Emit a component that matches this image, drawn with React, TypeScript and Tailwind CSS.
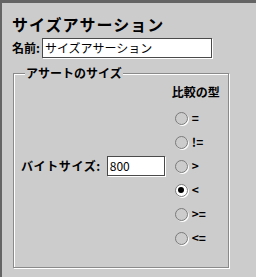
import React from "react";

const ops = ["=", "!=", ">", "<", ">=", "<="];

function Radio({ checked, label }: { checked?: boolean; label: string }) {
  return (
    <div className="flex h-[24px] items-center pl-[3px]">
      <span
        className={
          "flex h-[13px] w-[13px] items-center justify-center rounded-full border border-[#7a7a7a] shadow-[1px_1px_0_#ffffff] " +
          (checked ? "bg-white" : "bg-[#cccccc]")
        }
      >
        {checked && <span className="h-[6px] w-[6px] rounded-full bg-black" />}
      </span>
      <span className="ml-[4px] text-[12px] font-bold leading-[16px]">{label}</span>
    </div>
  );
}

export default function App() {
  return (
    <div
      className="h-[277px] w-[256px] overflow-hidden border-l-[2px] border-t-[3px] border-[#646464] bg-[#cccccc] pl-[10px] pt-[11px] text-black"
      style={{ fontFamily: '"Noto Sans CJK JP", "Noto Sans", sans-serif' }}
    >
      <div className="text-[16px] font-bold leading-[20px] tracking-[1px]">サイズアサーション</div>
      <div className="mt-[4px] flex h-[20px] items-center">
        <span className="text-[12px] font-bold leading-[16px]">名前:</span>
        <div className="ml-[2px] flex h-[20px] w-[170px] items-center border border-[#4a4a4a] bg-white pl-[2px] text-[12px] leading-[16px] shadow-[1px_1px_0_#ffffff]">
          サイズアサーション
        </div>
      </div>
      <fieldset className="ml-[1px] mt-[7px] w-[216px] border border-[#8a8a8a] pb-[17px] pl-[7px] shadow-[1px_1px_0_#ffffff,inset_1px_1px_0_#ffffff]">
        <legend className="ml-[4px] bg-[#cccccc] px-[1px] text-[12px] font-bold leading-[16px]">アサートのサイズ</legend>
        <div className="flex items-center">
          <div className="flex items-center">
            <span className="text-[12px] font-bold leading-[16px] tracking-[0.6px]">バイトサイズ:</span>
            <div className="ml-[6px] flex h-[20px] w-[58px] items-center border border-[#4a4a4a] bg-white pl-[2px] text-[12px] leading-[16px] shadow-[1px_1px_0_#ffffff]">
              800
            </div>
          </div>
          <div className="ml-[7px] flex flex-col pt-[3px]">
            <div className="mb-[6px] text-[12px] font-bold leading-[16px]">比較の型</div>
            {ops.map((o) => (
              <Radio key={o} label={o} checked={o === "<"} />
            ))}
          </div>
        </div>
      </fieldset>
    </div>
  );
}
